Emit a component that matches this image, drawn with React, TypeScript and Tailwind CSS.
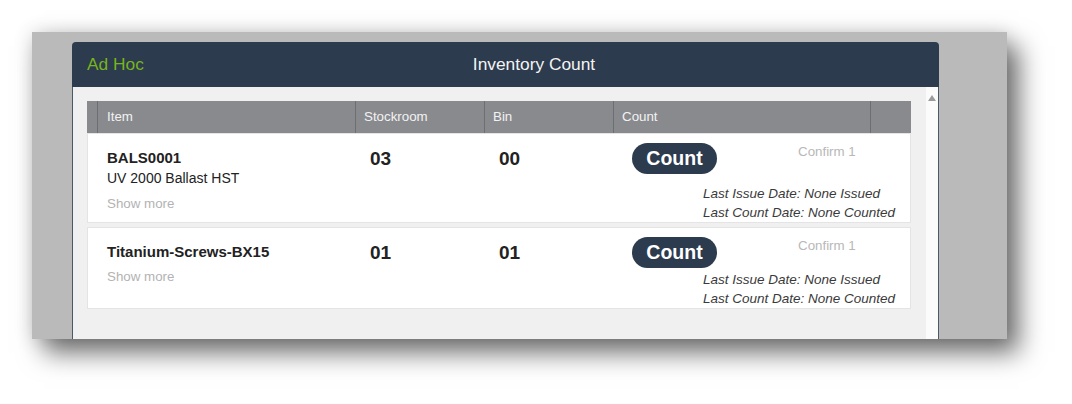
import React from "react";

const font = { fontFamily: '"Liberation Sans", Arial, sans-serif' };

type Row = {
  code: string;
  desc?: string;
  stock: string;
  bin: string;
};

const rows: Row[] = [
  { code: "BALS0001", desc: "UV 2000 Ballast HST", stock: "03", bin: "00" },
  { code: "Titanium-Screws-BX15", stock: "01", bin: "01" },
];

function ItemRow({ r }: { r: Row }) {
  return (
    <div className="flex border border-[#e4e4e4] bg-white">
      <div className={r.desc ? "w-[267px] pl-[19px] pt-[13px] pb-[8px]" : "w-[267px] pl-[19px] pt-[13px] pb-[9px]"}>
        <div className="text-[15px] font-bold leading-[21px] text-[#222]">{r.code}</div>
        {r.desc && <div className="text-[14px] leading-[20px] text-[#222]">{r.desc}</div>}
        <div className={r.desc ? "mt-[6px] text-[13.33px] leading-[20px] text-[#b3b3b3]" : "mt-[5px] text-[13.33px] leading-[20px] text-[#b3b3b3]"}>
          Show more
        </div>
      </div>
      <div className="w-[129px] pl-[15px] pt-[13px] text-[19px] font-bold leading-[24px] text-[#222]">{r.stock}</div>
      <div className="w-[129px] pl-[15px] pt-[13px] text-[19px] font-bold leading-[24px] text-[#222]">{r.bin}</div>
      <div className="flex flex-1 flex-col justify-between pt-[9px]">
        <div className="flex items-start pl-[19px]">
          <div className="flex h-[31px] w-[85px] items-center justify-center rounded-full bg-[#2c3b4e] text-[19.5px] font-bold text-white">
            Count
          </div>
          <div className="ml-[81px] mt-[1px] text-[13.33px] leading-[16px] text-[#b8b8b8]">Confirm 1</div>
        </div>
        <div className="mt-[2px] pl-[90px] text-[13.5px] italic leading-[19px] text-[#3a3a3a]">
          <div>Last Issue Date: None Issued</div>
          <div>Last Count Date: None Counted</div>
        </div>
      </div>
    </div>
  );
}

export default function App() {
  return (
    <div className="h-[404px] w-[1072px] overflow-hidden bg-white pl-[32px] pt-[32px]" style={font}>
      <div className="h-[307px] w-[975px] overflow-hidden bg-[#bababa] pl-[40px] pt-[10px] shadow-[12px_14px_24px_rgba(0,0,0,0.55),0_0_18px_rgba(0,0,0,0.15)]">
        <div className="flex h-[297px] w-[867px] flex-col overflow-hidden rounded-t-[4px] bg-[#2c3b4e]">
          <div className="flex h-[45px] shrink-0 items-center pl-[15px] text-[17.33px]">
            <span className="text-[#78b41c]">Ad Hoc</span>
            <span className="ml-[329px] text-[#f4f4f4]">Inventory Count</span>
          </div>
          <div className="flex flex-1 border-x border-[#4b5866]">
            <div className="flex-1 bg-[#f0f0f0] pl-[14px] pr-[15px] pt-[14px]">
              <div className="flex h-[32px] w-[824px] bg-[#898a8e] text-[13.33px] text-[#f2f2f2]">
                <div className="w-[10px]" />
                <div className="flex w-[258px] items-center border-l border-[#6d6e72] pl-[9px]">Item</div>
                <div className="flex w-[129px] items-center border-l border-[#6d6e72] pl-[8px]">Stockroom</div>
                <div className="flex w-[129px] items-center border-l border-[#6d6e72] pl-[8px]">Bin</div>
                <div className="flex w-[257px] items-center border-l border-[#6d6e72] pl-[8px]">Count</div>
                <div className="w-[41px] border-l border-[#6d6e72]" />
              </div>
              <div className="flex w-[824px] flex-col gap-[4px]">
                {rows.map((r) => (
                  <ItemRow key={r.code} r={r} />
                ))}
              </div>
            </div>
            <div className="w-[12px] bg-[#fbfbfb] pt-[8px] pl-[2px]">
              <svg width="8" height="6" viewBox="0 0 8 6">
                <polygon points="4,0 8,6 0,6" fill="#9a9a9a" />
              </svg>
            </div>
          </div>
        </div>
      </div>
    </div>
  );
}
